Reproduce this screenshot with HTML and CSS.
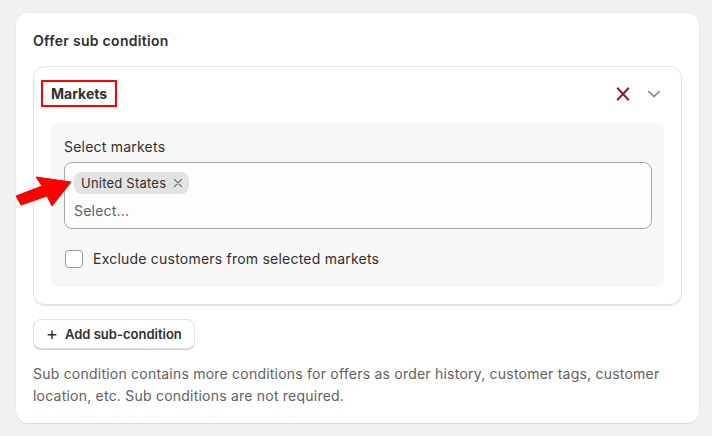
FILE: index.html
```html
<!DOCTYPE html>
<html lang="en">
<head>
    <meta charset="UTF-8">
    <meta name="viewport" content="width=device-width, initial-scale=1.0">
    <title>Offer sub condition</title>
    <link rel="stylesheet" href="styles.css">
</head>
<body>
    <div class="card">
        <h2 class="card-title">Offer sub condition</h2>

        <div class="condition">
            <div class="condition-head">
                <span class="condition-name">Markets</span>
                <div class="condition-actions">
                    <svg class="icon-remove" width="20" height="20" viewBox="0 0 20 20">
                        <path d="M4.2 3.8 L15.8 16.2 M15.8 3.8 L4.2 16.2" stroke="#8e1f31" stroke-width="2" fill="none"/>
                    </svg>
                    <svg class="icon-chevron" width="20" height="20" viewBox="0 0 20 20">
                        <path d="M4.8 7.6 L10 12.6 L15.2 7.6" stroke="#8a8a8a" stroke-width="1.6" fill="none" stroke-linecap="round" stroke-linejoin="round"/>
                    </svg>
                </div>
            </div>

            <div class="condition-body">
                <label class="field-label">Select markets</label>
                <div class="tag-input">
                    <span class="tag">United States
                        <svg class="tag-x" width="10" height="10" viewBox="0 0 10 10">
                            <path d="M1.5 1.5 L8.5 8.5 M8.5 1.5 L1.5 8.5" stroke="#7a7a7a" stroke-width="1.4" stroke-linecap="round"/>
                        </svg>
                    </span>
                    <div class="placeholder">Select...</div>
                </div>
                <label class="check-row">
                    <span class="checkbox"></span>
                    Exclude customers from selected markets
                </label>
            </div>
        </div>

        <button class="add-btn"><span class="plus">+</span>Add sub-condition</button>

        <p class="help">Sub condition contains more conditions for offers as order history, customer tags, customer location, etc. Sub conditions are not required.</p>
    </div>

    <!-- annotation arrow -->
    <svg class="arrow" width="70" height="45" viewBox="10 165 70 45">
        <polygon points="71,182 36,177 42,186 16,196 21,205 47,196 52,206" fill="#ff0000" stroke="#ff0000" stroke-width="1" stroke-linejoin="round"/>
    </svg>
</body>
</html>
```

FILE: styles.css
```css
body {
    font-family: Inter, "Noto Sans", Arial, sans-serif;
    background-color: #f1f1f1;
    color: #303030;
    letter-spacing: 0.22px;
    margin: 0;
    padding: 13px 13px 14px 16px;
    position: relative;
}

.card {
    background-color: #ffffff;
    border-radius: 12px;
    padding: 18px 17px 16px 17px;
    box-shadow: 0 1px 0 #dcdcdc, 0 0 0 1px #ececec;
}

.card-title {
    font-size: 14px;
    font-weight: 600;
    line-height: 20px;
    letter-spacing: 0.3px;
    margin: 0 0 15px 0;
}

/* Condition block */
.condition {
    border: 1px solid #e3e3e3;
    border-radius: 12px;
    padding: 13px 17px 17px 17px;
    box-shadow: 0 1px 0 #e3e3e3;
}

.condition-head {
    display: flex;
    align-items: center;
    justify-content: space-between;
    margin-bottom: 16px;
}

.condition-name {
    font-size: 14px;
    font-weight: 700;
    line-height: 19px;
    letter-spacing: 0;
    padding: 2px 8px;
    margin-left: -10px;
    border: 2px solid #ff0000;
}

.condition-actions {
    display: flex;
    align-items: center;
    gap: 11px;
}

.condition-actions svg {
    display: block;
}

.condition-body {
    background-color: #f7f7f7;
    border-radius: 8px;
    padding: 14px 12px 18px 13px;
}

.field-label {
    display: block;
    font-size: 14px;
    line-height: 20px;
    margin-bottom: 5px;
}

.tag-input {
    background-color: #fdfdfd;
    border: 1px solid #a8a8a8;
    border-radius: 8px;
    padding: 9px 9px 7px 9px;
}

.tag {
    display: inline-flex;
    align-items: center;
    height: 22px;
    padding: 0 6px 0 7px;
    background-color: #e3e3e3;
    border-radius: 8px;
    font-size: 13px;
}

.tag-x {
    display: block;
    margin-left: 7px;
}

.placeholder {
    font-size: 14px;
    line-height: 20px;
    color: #616161;
    margin-top: 7px;
}

.check-row {
    display: flex;
    align-items: center;
    gap: 10px;
    margin-top: 20px;
    font-size: 14px;
    line-height: 20px;
}

.checkbox {
    width: 16px;
    height: 16px;
    margin-left: 1px;
    border: 1px solid #9a9a9a;
    border-radius: 4px;
    background-color: #ffffff;
}

/* Add button */
.add-btn {
    display: inline-flex;
    align-items: center;
    margin-top: 14px;
    height: 30px;
    padding: 0 12px 0 12px;
    background-color: #ffffff;
    border: 1px solid #e3e3e3;
    border-radius: 8px;
    box-shadow: 0 1px 0 #cfcfcf;
    font-family: inherit;
    font-size: 13px;
    font-weight: 600;
    letter-spacing: 0;
    color: #303030;
}

.plus {
    font-size: 18px;
    font-weight: 400;
    margin-right: 7px;
    line-height: 18px;
}

.help {
    font-size: 14px;
    line-height: 22px;
    color: #616161;
    margin: 14px 0 0 0;
}

.arrow {
    position: absolute;
    left: 10px;
    top: 165px;
}
```
